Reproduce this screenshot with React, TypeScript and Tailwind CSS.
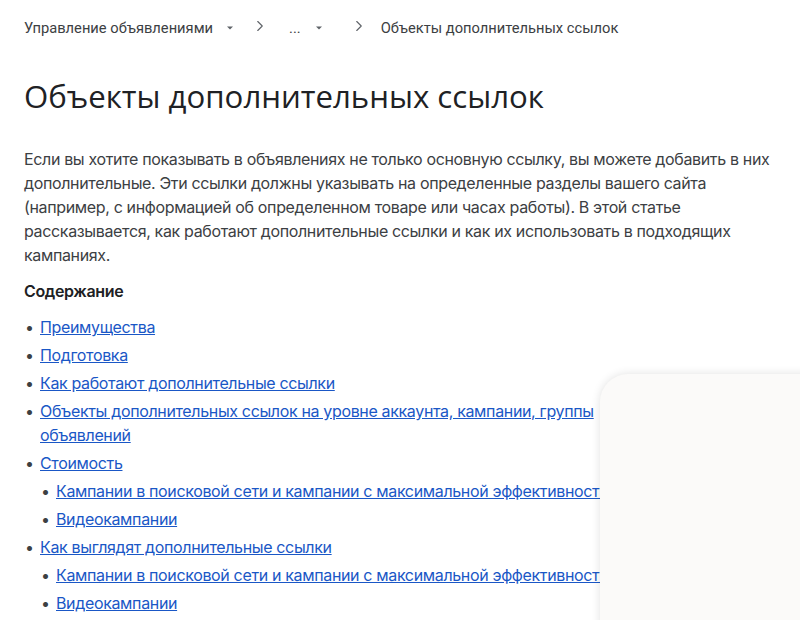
import { ChevronRight } from 'lucide-react';

const toc: { text: string; level: number }[] = [
  { text: 'Преимущества', level: 0 },
  { text: 'Подготовка', level: 0 },
  { text: 'Как работают дополнительные ссылки', level: 0 },
  { text: 'Объекты дополнительных ссылок на уровне аккаунта, кампании, группы объявлений', level: 0 },
  { text: 'Стоимость', level: 0 },
  { text: 'Кампании в поисковой сети и кампании с максимальной эффективностью', level: 1 },
  { text: 'Видеокампании', level: 1 },
  { text: 'Как выглядят дополнительные ссылки', level: 0 },
  { text: 'Кампании в поисковой сети и кампании с максимальной эффективностью', level: 1 },
  { text: 'Видеокампании', level: 1 },
];

function Caret({ gap }: { gap: string }) {
  return (
    <svg width="10" height="10" viewBox="0 0 10 10" className={gap}>
      <path d="M2 3.5h6L5 6.5z" fill="#5f6368" />
    </svg>
  );
}

export default function App() {
  return (
    <div className="relative w-[800px] h-[620px] overflow-hidden bg-white" style={{ fontFamily: 'Inter, "Noto Sans", sans-serif' }}>
      {/* breadcrumbs */}
      <nav className="flex items-center h-[56px] px-6 text-[14.7px] text-[#3c4043]" style={{ fontFamily: 'Roboto, sans-serif' }}>
        <span>Управление объявлениями</span>
        <Caret gap="ml-[12px]" />
        <ChevronRight size={18} strokeWidth={1.5} className="ml-[16px] text-[#5f6368] -mt-[4px]" />
        <span className="ml-[20px]">...</span>
        <Caret gap="ml-[13px]" />
        <ChevronRight size={18} strokeWidth={1.5} className="ml-[26px] text-[#5f6368] -mt-[4px]" />
        <span className="ml-[13px]">Объекты дополнительных ссылок</span>
      </nav>

      <main className="px-6 pr-[30px] tracking-[-0.35px]">
        <h1 className="mt-[20px] text-[31.2px] leading-[40px] tracking-normal text-[#202124] font-normal" style={{ fontFamily: '"Open Sans", Roboto, sans-serif' }}>
          Объекты дополнительных ссылок
        </h1>

        <p className="mt-[31px] text-[16px] leading-[24px] text-[#3c4043]">
          Если вы хотите показывать в объявлениях не только основную ссылку, вы можете добавить в них дополнительные. Эти ссылки должны указывать на определенные разделы вашего сайта (например, с информацией об определенном товаре или часах работы). В этой статье рассказывается, как работают дополнительные ссылки и как их использовать в подходящих кампаниях.
        </p>

        <h2 className="mt-[12px] text-[16px] leading-[24px] font-semibold text-[#202124]">Содержание</h2>

        <ul className="mt-[12px] text-[16px] leading-[24px]">
          {toc.map((item, i) => (
            <li key={i} className={`flex mb-[4px] ${item.level === 1 ? 'pl-[16px]' : ''}`}>
              <span className="w-[16px] shrink-0 text-[#3c4043] pl-[1px]">•</span>
              <a href="#" className="underline text-[#1a57c6] whitespace-nowrap">
                {item.text.length > 70 ? (
                  <>
                    Объекты дополнительных ссылок на уровне аккаунта, кампании, группы
                    <br />
                    объявлений
                  </>
                ) : (
                  item.text
                )}
              </a>
            </li>
          ))}
        </ul>
      </main>

      {/* floating panel */}
      <div className="absolute left-[600px] top-[374px] w-[260px] h-[300px] rounded-tl-[28px] bg-[#fbfaf9] shadow-[0_0_10px_rgba(0,0,0,0.12)]" />
    </div>
  );
}
